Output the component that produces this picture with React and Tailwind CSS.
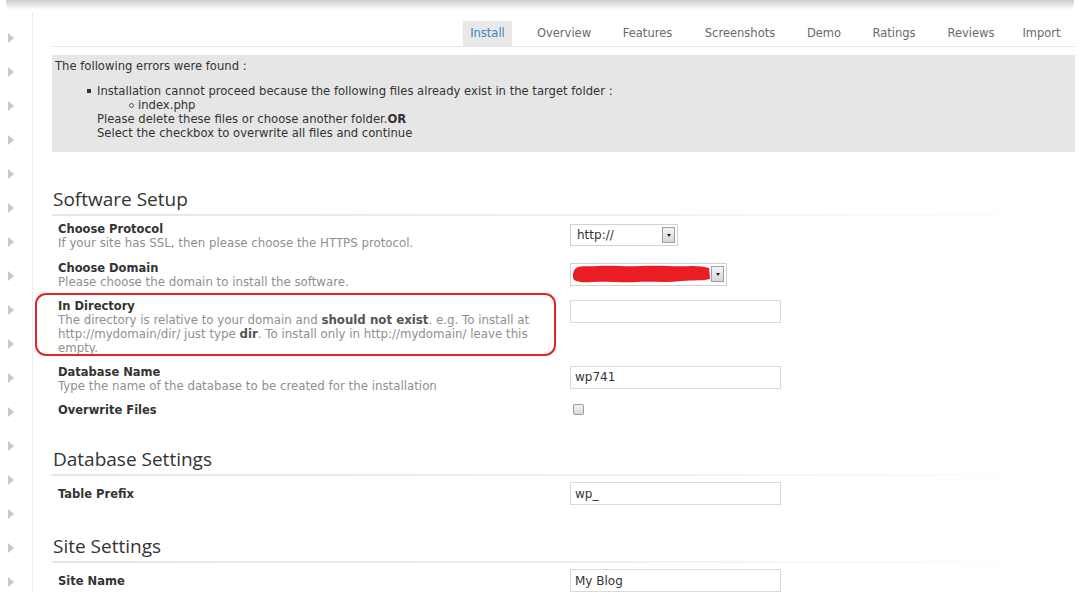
import React from "react";

const FONT = { fontFamily: '"DejaVu Sans", Verdana, sans-serif' };
const HFONT = { fontFamily: '"Open Sans", "DejaVu Sans", sans-serif' };

function Tri() {
  return (
    <div className="h-[34px] flex items-center pl-[8px]">
      <div className="w-0 h-0 border-t-[5px] border-b-[5px] border-l-[6px] border-t-transparent border-b-transparent border-l-[#c9c9c9]" />
    </div>
  );
}

function Tab({ label, w, active }) {
  return (
    <div
      className={`h-[25px] flex items-center justify-center pt-[1px] text-[11.5px] ${w} ${
        active ? "bg-[#e8e8e8] text-[#3b86c4]" : "text-[#6a6a6a]"
      }`}
    >
      {label}
    </div>
  );
}

function Heading({ children }) {
  return (
    <div>
      <div className="text-[19px] leading-[22px] text-[#333] pl-[1px]" style={HFONT}>
        {children}
      </div>
      <div className="mt-[4px] h-[2px] bg-linear-to-r from-[#dde8f0] via-[#e9f0f5] to-white" />
    </div>
  );
}

function SelBtn() {
  return (
    <div className="w-[13px] h-[16px] border border-[#a0a0a0] bg-linear-to-b from-[#f4f4f4] to-[#d6d6d6] flex items-center justify-center">
      <div className="w-0 h-0 border-l-[2.5px] border-r-[2.5px] border-t-[3px] border-l-transparent border-r-transparent border-t-[#222]" />
    </div>
  );
}

function TextInput({ value }) {
  return (
    <div className="w-[211px] h-[23px] border border-[#d9d9d9] bg-white flex items-center pl-[4px] text-[12px] text-[#333]">
      {value}
    </div>
  );
}

function Row({ label, desc, children, center, inputMt = "mt-[1px]", annot, pb = "pb-[5px]" }) {
  return (
    <div className={`relative flex pt-[6px] ${pb} ${center ? "items-center" : "items-start"}`}>
      {annot && (
        <div className="absolute left-[-17px] top-0 w-[521px] h-[63px] border-[2.5px] border-[#e3232a] rounded-[11px]" />
      )}
      <div className="w-[518px] pl-[6px] pr-[22px]">
        <div className="text-[11.5px] leading-[14px] font-bold text-[#333]">{label}</div>
        {desc && <div className="text-[11.8px] leading-[14px] text-[#8f8f8f]">{desc}</div>}
      </div>
      <div className={center ? "" : inputMt}>{children}</div>
    </div>
  );
}

export default function App() {
  const tris = Array.from({ length: 17 });
  return (
    <div className="w-[1080px] h-[592px] overflow-hidden bg-white flex flex-col" style={FONT}>
      <div className="h-[10px] shrink-0 mx-[6px] rounded-b-[6px] bg-linear-to-b from-[#cdcdcd] via-[#e9e9e9] to-white" />
      <div className="flex flex-1 min-h-0">
        <div className="w-[33px] shrink-0 border-r border-[#ececec] pt-[9px] mt-[2px]">
          {tris.map((_, i) => (
            <Tri key={i} />
          ))}
        </div>
        <div className="flex-1 pl-[19px] pr-[5px]">
          <div className="mt-[11px] flex justify-end border-b border-[#e6e6e6] pr-[7px]">
            <div className="flex gap-[19px]">
              <Tab label="Install" w="w-[49px]" active />
              <Tab label="Overview" w="w-[66px]" />
              <Tab label="Features" w="w-[63px]" />
              <Tab label="Screenshots" w="w-[84px]" />
              <Tab label="Demo" w="w-[46px]" />
              <Tab label="Ratings" w="w-[56px]" />
              <Tab label="Reviews" w="w-[60px]" />
            </div>
            <div className="ml-[14px]">
              <Tab label="Import" w="w-[53px]" />
            </div>
          </div>

          <div className="mt-[8px] bg-[#e6e6e6] px-[3px] pt-[4px] pb-[1px] text-[11.6px] leading-[14px] text-[#333]">
            <div>The following errors were found :</div>
            <div className="mt-[11px] mb-[11px] pl-[42px]">
              <div className="relative">
                <span className="absolute left-[-10px] top-[5px] w-[4px] h-[4px] bg-[#333]" />
                Installation cannot proceed because the following files already exist in the target folder :
              </div>
              <div className="relative pl-[41px]">
                <span className="absolute left-[32px] top-[5px] w-[5px] h-[5px] rounded-full border border-[#555]" />
                index.php
              </div>
              <div>
                Please delete these files or choose another folder.<b>OR</b>
              </div>
              <div>Select the checkbox to overwrite all files and continue</div>
            </div>
          </div>

          <div className="mt-[36px]">
            <Heading>Software Setup</Heading>
            <Row label="Choose Protocol" desc="If your site has SSL, then please choose the HTTPS protocol." inputMt="mt-[2px]" pb="pb-[4.5px]">
              <div className="w-[108px] h-[22px] border border-[#d2d2d2] bg-white flex items-center justify-between pl-[6px] pr-[2px] text-[12px] text-[#333]">
                <span>http://</span>
                <SelBtn />
              </div>
            </Row>
            <Row label="Choose Domain" desc="Please choose the domain to install the software." inputMt="mt-[2px]" pb="pb-[4.5px]">
              <div className="w-[157px] h-[23px] border border-[#d2d2d2] bg-white flex items-center justify-between pl-[1px] pr-[2px]">
                <svg width="140" height="20" viewBox="0 0 140 20">
                  <path
                    d="M4 4 C10 1 18 3 26 2 C40 1 55 3 70 2 C88 1 105 3 120 2 C128 2 134 3 138 4 L139 15 C132 17 122 16 110 17 C95 19 80 17 66 18 C50 19 35 17 20 18 C12 19 6 18 2 16 C0 12 1 7 4 4 Z"
                    fill="#ea1c24"
                  />
                </svg>
                <SelBtn />
              </div>
            </Row>
            <Row
              annot
              pb="pb-[3.5px]"
              label="In Directory"
              desc={
                <>
                  The directory is relative to your domain and <b className="text-[#555]">should not exist</b>. e.g. To install at
                  http://mydomain/dir/ just type <b className="text-[#555]">dir</b>. To install only in http://mydomain/ leave this
                  empty.
                </>
              }
            >
              <TextInput value="" />
            </Row>
            <Row label="Database Name" desc="Type the name of the database to be created for the installation" pb="pb-[4.5px]">
              <TextInput value="wp741" />
            </Row>
            <Row label="Overwrite Files">
              <div className="ml-[3px] w-[11px] h-[11px] rounded-[2px] border border-[#9c9c9c] bg-linear-to-b from-[#f2f2f2] to-[#d9d9d9]" />
            </Row>
          </div>

          <div className="mt-[26px]">
            <Heading>Database Settings</Heading>
            <Row label="Table Prefix" center>
              <TextInput value="wp_" />
            </Row>
          </div>

          <div className="mt-[25px]">
            <Heading>Site Settings</Heading>
            <Row label="Site Name" center>
              <TextInput value="My Blog" />
            </Row>
          </div>
        </div>
      </div>
    </div>
  );
}
